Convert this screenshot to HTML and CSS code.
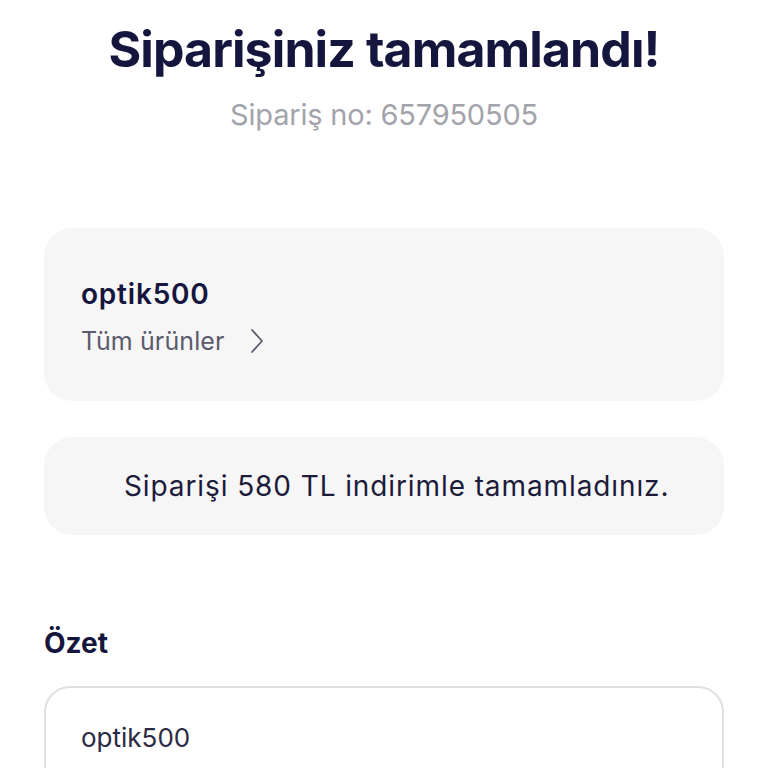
FILE: index.html
```html
<!DOCTYPE html>
<html lang="tr">
<head>
<meta charset="utf-8">
<link rel="stylesheet" href="styles.css">
</head>
<body>
<main class="page">
  <header class="head">
    <h1 class="title">Siparişiniz tamamlandı!</h1>
    <p class="order-no">Sipariş no: 657950505</p>
  </header>
  <section class="card store">
    <div class="store-name">optik500</div>
    <div class="store-link">
      <span>Tüm ürünler</span>
      <svg class="chev" width="14" height="26" viewBox="0 0 14 26"><path d="M2 2 L12 13 L2 24" fill="none" stroke="#5b5b6b" stroke-width="1.8" stroke-linecap="round" stroke-linejoin="round"/></svg>
    </div>
  </section>
  <section class="card discount">
    <p>Siparişi 580 TL indirimle tamamladınız.</p>
  </section>
  <h2 class="summary-title">Özet</h2>
  <section class="summary">
    <div class="summary-store">optik500</div>
  </section>
</main>
</body>
</html>
```
FILE: styles.css
```css
* { box-sizing: border-box; }
html, body { margin: 0; padding: 0; background: #fff; }
body { font-family: "Inter", "Noto Sans", sans-serif; color: #17173a; }
.page { padding: 0 44px; }
.head { text-align: center; padding-top: 19px; }
.title { margin: 0; font-size: 50px; line-height: 60px; font-weight: 700; color: #15163d; letter-spacing: -0.9px; }
.order-no { margin: 18px 0 0; font-size: 29px; line-height: 36px; color: #a3a3ab; font-weight: 400; letter-spacing: -0.2px; }
.card { background: #f6f6f7; border-radius: 28px; }
.store { margin-top: 95px; height: 173px; padding: 49px 37px 0; }
.store-name { font-size: 28px; line-height: 34px; font-weight: 600; color: #15163d; letter-spacing: 0.8px; }
.store-link { display: flex; align-items: center; gap: 26px; margin-top: 14px; font-size: 25px; line-height: 32px; color: #5b5b6b; letter-spacing: 0.1px; }
.discount { margin-top: 36px; height: 98px; display: flex; align-items: center; padding-left: 80px; }
.discount p { margin: 0; font-size: 28px; line-height: 34px; color: #1c1c3a; letter-spacing: 0.9px; }
.summary-title { margin: 91px 0 0; font-size: 28px; line-height: 34px; font-weight: 700; color: #15163d; }
.summary { margin-top: 26px; border: 2px solid #e0e0e3; border-radius: 26px; height: 160px; padding: 34px 35px 0; }
.summary-store { font-size: 26px; line-height: 32px; color: #2a2a44; }
```
